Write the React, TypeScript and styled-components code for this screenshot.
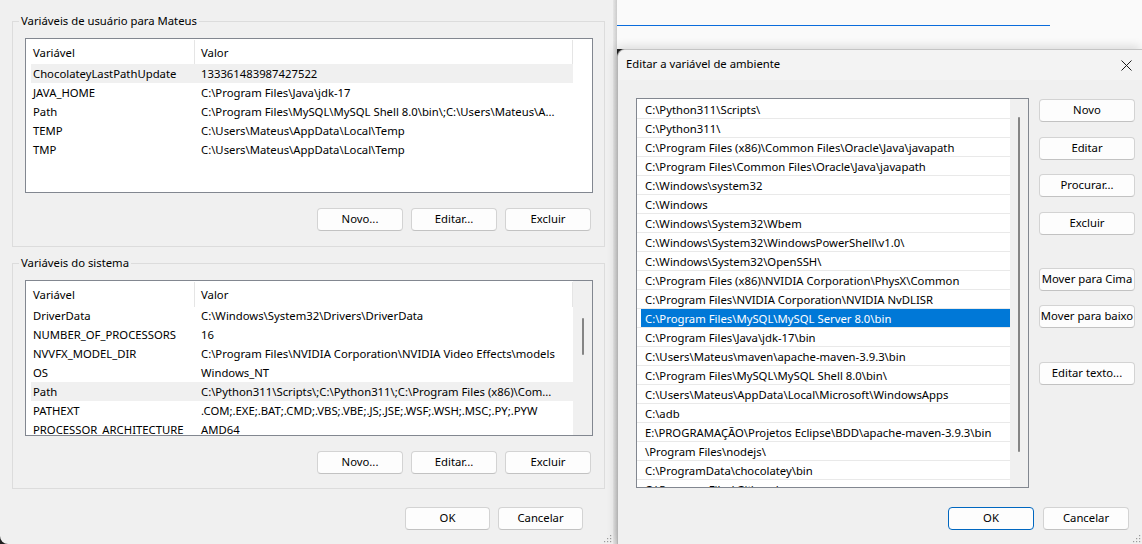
import React from "react";
import styled, { createGlobalStyle } from "styled-components";

const FONT = `"Segoe UI", "Noto Sans", "DejaVu Sans", sans-serif`;
const FS = "11.3px";

const GlobalStyle = createGlobalStyle`
  * { box-sizing: border-box; }
  html, body { margin: 0; padding: 0; background: #1f1f1f; }
  body { font-family: ${FONT}; font-size: ${FS}; color: #000; }
`;

const Screen = styled.div`
  width: 1142px;
  height: 544px;
  display: flex;
  overflow: hidden;
  font-family: ${FONT};
  font-size: ${FS};
  color: #000;
`;

/* ---------- left window ---------- */
const LeftWindow = styled.div`
  position: relative;
  flex: none;
  width: 613px;
  height: 544px;
  background: #f0f0f0;
  border-bottom-left-radius: 8px;
  padding: 13px 8px 0 12px;
  display: flex;
  flex-direction: column;
`;

const WindowEdge = styled.div`
  flex: none;
  width: 4px;
  height: 544px;
  background: linear-gradient(to right, #e6e6e6, #cbcbcb);
`;

const Group = styled.fieldset<{ $mt?: number }>`
  margin: ${(p) => p.$mt ?? 0}px 0 0 0;
  padding: 0;
  border: 1px solid #dcdcdc;
  min-width: 0;
`;

const GroupTitle = styled.legend`
  margin-left: 6px;
  padding: 0 2px;
  line-height: 16px;
  font-size: ${FS};
`;

const GroupBody = styled.div<{ $pb: number }>`
  padding: 9px 11px ${(p) => p.$pb}px 12px;
  display: flex;
  flex-direction: column;
`;

const ListBox = styled.div<{ $h: number }>`
  height: ${(p) => p.$h}px;
  border: 1px solid #828790;
  background: #fff;
  display: flex;
  overflow: hidden;
`;

const ListMain = styled.div`
  flex: 1;
  min-width: 0;
  display: flex;
  flex-direction: column;
`;

const HeaderRow = styled.div`
  flex: none;
  display: grid;
  grid-template-columns: 169px 378px;
  height: 25px;
`;

const HeaderCell = styled.div<{ $pl: number }>`
  padding-left: ${(p) => p.$pl}px;
  line-height: 25px;
  border-right: 1px solid #e5e5e5;
  margin-top: 1px;
`;

const DataRow = styled.div<{ $hl?: boolean }>`
  flex: none;
  display: grid;
  grid-template-columns: 164px 378px;
  height: 19px;
  line-height: 19px;
  margin-left: 5px;
  width: 542px;
  background: ${(p) => (p.$hl ? "#f0f0f0" : "transparent")};
  white-space: nowrap;
`;

const Cell = styled.div<{ $pl: number }>`
  padding-left: ${(p) => p.$pl}px;
  overflow: hidden;
`;

const VScroll = styled.div<{ $w: number; $track: boolean }>`
  flex: none;
  width: ${(p) => p.$w}px;
  background: ${(p) => (p.$track ? "#f0f0f0" : "#fff")};
`;

const Thumb = styled.div<{ $top: number; $h: number; $left: number }>`
  margin: ${(p) => p.$top}px 0 0 ${(p) => p.$left}px;
  width: 2px;
  height: ${(p) => p.$h}px;
  background: #858585;
  border-radius: 1px;
`;

const ButtonRow = styled.div<{ $mt: number; $pr: number; $gap: number }>`
  display: flex;
  justify-content: flex-end;
  gap: ${(p) => p.$gap}px;
  margin-top: ${(p) => p.$mt}px;
  padding-right: ${(p) => p.$pr}px;
`;

const Btn = styled.button<{ $w?: number; $mt?: number; $primary?: boolean }>`
  flex: none;
  width: ${(p) => p.$w ?? 86}px;
  height: 23px;
  margin-top: ${(p) => p.$mt ?? 0}px;
  padding: 0 0 1px 0;
  font-family: ${FONT};
  font-size: ${FS};
  color: #000;
  background: #fdfdfd;
  border: 1px solid ${(p) => (p.$primary ? "#0067c0" : "#d3d3d3")};
  border-bottom-color: ${(p) => (p.$primary ? "#0067c0" : "#c2c2c2")};
  border-radius: 4px;
  white-space: nowrap;
  overflow: visible;
  display: flex;
  align-items: center;
  justify-content: center;
  line-height: 1;
`;

const Grip = styled.svg`
  position: absolute;
  right: 1px;
  bottom: 1px;
`;

/* ---------- right side ---------- */
const RightColumn = styled.div`
  flex: 1;
  min-width: 0;
  display: flex;
  flex-direction: column;
`;

const BackWindow = styled.div`
  flex: none;
  height: 49px;
  background: #fafafa;
  padding-top: 25px;
`;

const BlueRule = styled.div`
  width: 433px;
  height: 0;
  border-top: 1px solid #0a6cdc;
`;

const Dialog = styled.div`
  position: relative;
  flex: 1;
  display: flex;
  flex-direction: column;
  background: #f0f0f0;
  border-top: 1px solid #c4c4c4;
  border-left: 1px solid #b5b5b5;
  border-top-left-radius: 8px;
  box-shadow: -2px -3px 10px rgba(0, 0, 0, 0.12);
`;

const TitleBar = styled.div`
  flex: none;
  height: 30px;
  display: flex;
  align-items: center;
  justify-content: space-between;
  padding: 0 10px 0 8px;
  background: #f3f3f3;
  border-top-left-radius: 8px;
`;

const TitleText = styled.span`
  line-height: 16px;
  margin-top: -2px;
`;

const DialogBody = styled.div`
  display: flex;
  align-items: flex-start;
  padding: 18px 0 0 18px;
`;

const PathList = styled.div`
  flex: none;
  width: 393px;
  height: 390px;
  border: 1px solid #828790;
  background: #fff;
  display: flex;
  overflow: hidden;
`;

const PathItems = styled.div`
  flex: 1;
  min-width: 0;
  display: flex;
  flex-direction: column;
  padding-top: 1px;
`;

const PathItem = styled.div`
  flex: none;
  height: 19px;
  display: flex;
  border-bottom: 1px solid #e9e9e9;
  padding-left: 4px;
`;

const PathText = styled.div<{ $sel?: boolean }>`
  flex: 1;
  padding: 0 0 0 4px;
  line-height: 19px;
  white-space: nowrap;
  overflow: hidden;
  background: ${(p) => (p.$sel ? "#0078d7" : "transparent")};
  color: ${(p) => (p.$sel ? "#fff" : "#000")};
`;

const SideButtons = styled.div`
  flex: none;
  display: flex;
  flex-direction: column;
  margin-left: 10px;
`;

const DialogFooter = styled.div`
  display: flex;
  justify-content: flex-end;
  gap: 9px;
  padding: 19px 13px 0 0;
`;

/* ---------- data ---------- */
const userVars: [string, string][] = [
  ["ChocolateyLastPathUpdate", "133361483987427522"],
  ["JAVA_HOME", "C:\\Program Files\\Java\\jdk-17"],
  ["Path", "C:\\Program Files\\MySQL\\MySQL Shell 8.0\\bin\\;C:\\Users\\Mateus\\A..."],
  ["TEMP", "C:\\Users\\Mateus\\AppData\\Local\\Temp"],
  ["TMP", "C:\\Users\\Mateus\\AppData\\Local\\Temp"],
];

const sysVars: [string, string][] = [
  ["DriverData", "C:\\Windows\\System32\\Drivers\\DriverData"],
  ["NUMBER_OF_PROCESSORS", "16"],
  ["NVVFX_MODEL_DIR", "C:\\Program Files\\NVIDIA Corporation\\NVIDIA Video Effects\\models"],
  ["OS", "Windows_NT"],
  ["Path", "C:\\Python311\\Scripts\\;C:\\Python311\\;C:\\Program Files (x86)\\Com..."],
  ["PATHEXT", ".COM;.EXE;.BAT;.CMD;.VBS;.VBE;.JS;.JSE;.WSF;.WSH;.MSC;.PY;.PYW"],
  ["PROCESSOR_ARCHITECTURE", "AMD64"],
];

const paths = [
  "C:\\Python311\\Scripts\\",
  "C:\\Python311\\",
  "C:\\Program Files (x86)\\Common Files\\Oracle\\Java\\javapath",
  "C:\\Program Files\\Common Files\\Oracle\\Java\\javapath",
  "C:\\Windows\\system32",
  "C:\\Windows",
  "C:\\Windows\\System32\\Wbem",
  "C:\\Windows\\System32\\WindowsPowerShell\\v1.0\\",
  "C:\\Windows\\System32\\OpenSSH\\",
  "C:\\Program Files (x86)\\NVIDIA Corporation\\PhysX\\Common",
  "C:\\Program Files\\NVIDIA Corporation\\NVIDIA NvDLISR",
  "C:\\Program Files\\MySQL\\MySQL Server 8.0\\bin",
  "C:\\Program Files\\Java\\jdk-17\\bin",
  "C:\\Users\\Mateus\\maven\\apache-maven-3.9.3\\bin",
  "C:\\Program Files\\MySQL\\MySQL Shell 8.0\\bin\\",
  "C:\\Users\\Mateus\\AppData\\Local\\Microsoft\\WindowsApps",
  "C:\\adb",
  "E:\\PROGRAMAÇÃO\\Projetos Eclipse\\BDD\\apache-maven-3.9.3\\bin",
  "\\Program Files\\nodejs\\",
  "C:\\ProgramData\\chocolatey\\bin",
  "C:\\Program Files\\Git\\cmd",
];
const SELECTED = 11;

/* ---------- pieces ---------- */
function GripDots() {
  const pts = [
    [8, 2],
    [8, 5],
    [5, 5],
    [8, 8],
    [5, 8],
    [2, 8],
  ];
  return (
    <Grip width="10" height="10" viewBox="0 0 10 10">
      {pts.map(([x, y], i) => (
        <rect key={i} x={x} y={y} width="1.2" height="1.2" fill="#9a9a9a" />
      ))}
    </Grip>
  );
}

function VarList({
  rows,
  height,
  highlight,
  scroll,
}: {
  rows: [string, string][];
  height: number;
  highlight: number;
  scroll?: { top: number; h: number };
}) {
  return (
    <ListBox $h={height}>
      <ListMain>
        <HeaderRow>
          <HeaderCell $pl={7}>Variável</HeaderCell>
          <HeaderCell $pl={6}>Valor</HeaderCell>
        </HeaderRow>
        {rows.map(([k, v], i) => (
          <DataRow key={k + i} $hl={i === highlight}>
            <Cell $pl={2}>{k}</Cell>
            <Cell $pl={6}>{v}</Cell>
          </DataRow>
        ))}
      </ListMain>
      <VScroll $w={19} $track={!!scroll}>
        {scroll && <Thumb $top={scroll.top} $h={scroll.h} $left={9} />}
      </VScroll>
    </ListBox>
  );
}

function CloseIcon() {
  return (
    <svg width="11" height="11" viewBox="0 0 11 11">
      <path d="M0.5 0.5 L10.5 10.5 M10.5 0.5 L0.5 10.5" stroke="#1b1b1b" strokeWidth="1" fill="none" />
    </svg>
  );
}

export default function App() {
  return (
    <>
      <GlobalStyle />
      <Screen>
        <LeftWindow>
          <Group>
            <GroupTitle>Variáveis de usuário para Mateus</GroupTitle>
            <GroupBody $pb={15}>
              <VarList rows={userVars} height={155} highlight={0} />
              <ButtonRow $mt={15} $pr={2} $gap={8}>
                <Btn>Novo...</Btn>
                <Btn>Editar...</Btn>
                <Btn>Excluir</Btn>
              </ButtonRow>
            </GroupBody>
          </Group>
          <Group $mt={8}>
            <GroupTitle>Variáveis do sistema</GroupTitle>
            <GroupBody $pb={14}>
              <VarList rows={sysVars} height={156} highlight={4} scroll={{ top: 37, h: 37 }} />
              <ButtonRow $mt={15} $pr={2} $gap={8}>
                <Btn>Novo...</Btn>
                <Btn>Editar...</Btn>
                <Btn>Excluir</Btn>
              </ButtonRow>
            </GroupBody>
          </Group>
          <ButtonRow $mt={18} $pr={22} $gap={8}>
            <Btn $w={85}>OK</Btn>
            <Btn $w={85}>Cancelar</Btn>
          </ButtonRow>
          <GripDots />
        </LeftWindow>
        <WindowEdge />
        <RightColumn>
          <BackWindow>
            <BlueRule />
          </BackWindow>
          <Dialog>
            <TitleBar>
              <TitleText>Editar a variável de ambiente</TitleText>
              <CloseIcon />
            </TitleBar>
            <DialogBody>
              <PathList>
                <PathItems>
                  {paths.map((p, i) => (
                    <PathItem key={p}>
                      <PathText $sel={i === SELECTED}>{p}</PathText>
                    </PathItem>
                  ))}
                </PathItems>
                <VScroll $w={18} $track>
                  <Thumb $top={18} $h={335} $left={8} />
                </VScroll>
              </PathList>
              <SideButtons>
                <Btn $w={96} $mt={1}>Novo</Btn>
                <Btn $w={96} $mt={15}>Editar</Btn>
                <Btn $w={96} $mt={14}>Procurar...</Btn>
                <Btn $w={96} $mt={15}>Excluir</Btn>
                <Btn $w={96} $mt={33}>Mover para Cima</Btn>
                <Btn $w={96} $mt={14}>Mover para baixo</Btn>
                <Btn $w={96} $mt={34}>Editar texto...</Btn>
              </SideButtons>
            </DialogBody>
            <DialogFooter>
              <Btn $primary>OK</Btn>
              <Btn>Cancelar</Btn>
            </DialogFooter>
            <GripDots />
          </Dialog>
        </RightColumn>
      </Screen>
    </>
  );
}
